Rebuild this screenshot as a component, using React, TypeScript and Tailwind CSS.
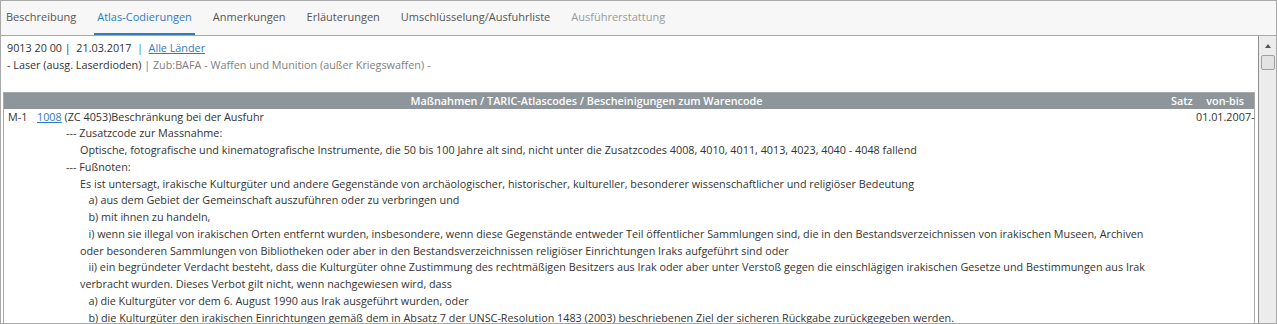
import React from 'react';

const tabs = [
  { label: 'Beschreibung' },
  { label: 'Atlas-Codierungen', active: true },
  { label: 'Anmerkungen' },
  { label: 'Erläuterungen' },
  { label: 'Umschlüsselung/Ausfuhrliste' },
  { label: 'Ausführerstattung', disabled: true },
];

const nb = '\u00a0\u00a0\u00a0';

const fussnoten = [
  'Es ist untersagt, irakische Kulturgüter und andere Gegenstände von archäologischer, historischer, kultureller, besonderer wissenschaftlicher und religiöser Bedeutung',
  nb + 'a) aus dem Gebiet der Gemeinschaft auszuführen oder zu verbringen und',
  nb + 'b) mit ihnen zu handeln,',
  nb + 'i) wenn sie illegal von irakischen Orten entfernt wurden, insbesondere, wenn diese Gegenstände entweder Teil öffentlicher Sammlungen sind, die in den Bestandsverzeichnissen von irakischen Museen, Archiven oder besonderen Sammlungen von Bibliotheken oder aber in den Bestandsverzeichnissen religiöser Einrichtungen Iraks aufgeführt sind oder',
  nb + 'ii) ein begründeter Verdacht besteht, dass die Kulturgüter ohne Zustimmung des rechtmäßigen Besitzers aus Irak oder aber unter Verstoß gegen die einschlägigen irakischen Gesetze und Bestimmungen aus Irak verbracht wurden. Dieses Verbot gilt nicht, wenn nachgewiesen wird, dass',
  nb + 'a) die Kulturgüter vor dem 6. August 1990 aus Irak ausgeführt wurden, oder',
  nb + 'b) die Kulturgüter den irakischen Einrichtungen gemäß dem in Absatz 7 der UNSC-Resolution 1483 (2003) beschriebenen Ziel der sicheren Rückgabe zurückgegeben werden.',
];

function TabBar() {
  return (
    <div className="flex h-[35px] items-stretch gap-[15px] border-b border-[#a9a9a9] bg-[#f7f7f7] pl-[2px] text-[11px]">
      {tabs.map((t) => (
        <div
          key={t.label}
          className={`flex items-center border-b-2 px-[3px] ${
            t.active
              ? 'border-[#2f7cc1] text-[#2f7cc1]'
              : t.disabled
              ? 'border-transparent text-[#9a9a9a]'
              : 'border-transparent text-[#555]'
          }`}
        >
          {t.label}
        </div>
      ))}
    </div>
  );
}

function Scrollbar() {
  return (
    <div className="flex w-[18px] shrink-0 flex-col items-center border-l border-[#8f8f8f] bg-[#ececec]">
      <div className="mt-[8px] h-0 w-0 border-x-[3px] border-b-[4px] border-x-transparent border-b-[#555]" />
      <div className="mt-[7px] h-[15px] w-[14px] rounded-[2px] border border-[#a0a0a0] bg-[#e3e3e3]" />
    </div>
  );
}

export default function App() {
  return (
    <div
      className="h-[324px] w-[1277px] overflow-hidden border border-[#a9a9a9] bg-white text-[#333]"
      style={{ fontFamily: '"Open Sans", "Liberation Sans", sans-serif' }}
    >
      <TabBar />
      <div className="flex h-[287px]">
        <div className="min-w-0 flex-1 overflow-hidden pl-[2px] pr-[3px] text-[10.8px] leading-[16.75px]">
          {/* Kopfinfo */}
          <div className="pl-[4px] pt-[4px]">
            <div>
              9013 20 00 |&nbsp; 21.03.2017 &nbsp;<span className="text-[#2f7cc1]">|</span>&nbsp;{' '}
              <span className="text-[#2f7cc1] underline">Alle Länder</span>
            </div>
            <div>
              - Laser (ausg. Laserdioden) <span className="text-[#808080]">| Zub:BAFA - Waffen und Munition (außer Kriegswaffen) -</span>
            </div>
          </div>

          {/* Maßnahmen-Tabelle */}
          <div className="mt-[18px] grid grid-cols-[1fr_27px_58px] border-x border-t border-[#a9a9a9]">
            <div className="bg-[#8e969b] text-center font-semibold leading-[16px] text-white">
              Maßnahmen / TARIC-Atlascodes / Bescheinigungen zum Warencode
            </div>
            <div className="bg-[#8e969b] pl-[2px] font-semibold leading-[16px] text-white">Satz</div>
            <div className="bg-[#8e969b] pr-[10px] text-right font-semibold leading-[16px] text-white">von-bis</div>

            <div className="pl-[4px]">
              <div className="flex">
                <span className="w-[29px]">M-1</span>
                <span>
                  <span className="text-[#2f7cc1] underline">1008</span> (ZC 4053)Beschränkung bei der Ausfuhr
                </span>
              </div>
              <div className="pl-[58px]">--- Zusatzcode zur Massnahme:</div>
              <div className="pl-[72px]">
                Optische, fotografische und kinematografische Instrumente, die 50 bis 100 Jahre alt sind, nicht unter die Zusatzcodes 4008, 4010, 4011, 4013, 4023, 4040 - 4048 fallend
              </div>
              <div className="pl-[58px]">--- Fußnoten:</div>
              <div className="pl-[72px]">
                {fussnoten.map((f, i) => (
                  <div key={i}>{f}</div>
                ))}
              </div>
            </div>
            <div />
            <div className="pr-[10px] text-right">01.01.2007-</div>
          </div>
        </div>
        <Scrollbar />
      </div>
    </div>
  );
}
